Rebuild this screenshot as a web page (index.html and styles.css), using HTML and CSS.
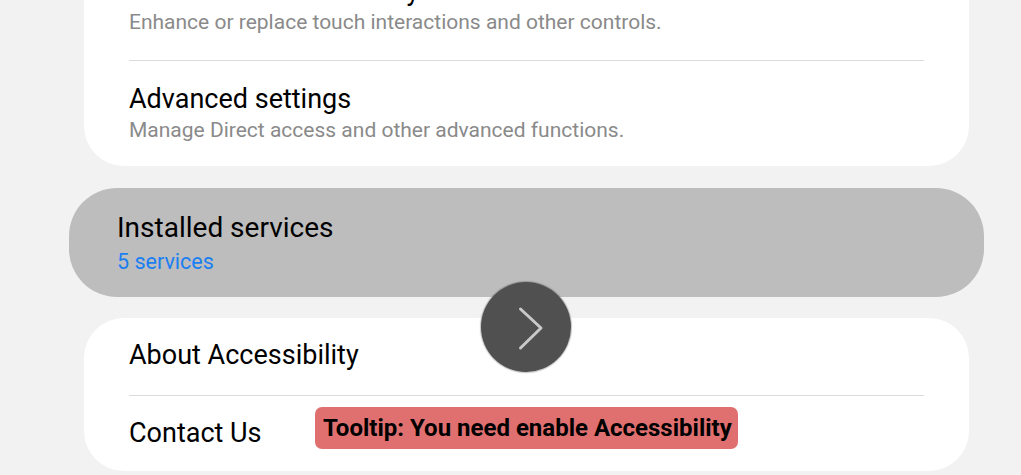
FILE: index.html
```html
<!DOCTYPE html>
<html lang="en">
<head>
<meta charset="utf-8">
<title>Accessibility</title>
<link rel="stylesheet" href="styles.css">
</head>
<body>
<main class="page">
  <section class="card">
    <div class="row row-first">
      <div class="title">Interaction and dexterity</div>
      <div class="sub">Enhance or replace touch interactions and other controls.</div>
    </div>
    <div class="divider"></div>
    <div class="row">
      <div class="title">Advanced settings</div>
      <div class="sub">Manage Direct access and other advanced functions.</div>
    </div>
  </section>

  <section class="pressed">
    <div class="p-title">Installed services</div>
    <div class="p-sub">5 services</div>
  </section>

  <section class="card">
    <div class="row row-single">
      <div class="title">About Accessibility</div>
    </div>
    <div class="divider"></div>
    <div class="row row-single row-last">
      <div class="title">Contact Us</div>
    </div>
  </section>
</main>

<button class="next-btn" aria-label="Next">
  <svg width="90" height="90" viewBox="0 0 90 90">
    <polyline points="39.5,27 60,46 39.5,66" fill="none" stroke="#c9c9c9" stroke-width="3" stroke-linecap="round" stroke-linejoin="round"/>
  </svg>
</button>

<div class="tooltip">Tooltip: You need enable Accessibility</div>
</body>
</html>
```

FILE: styles.css
```css
html, body {
  margin: 0;
  padding: 0;
  background: #f2f2f2;
  font-family: Roboto, "Liberation Sans", sans-serif;
  overflow: hidden;
}

.page {
  display: flex;
  flex-direction: column;
  margin: -47px 52px 0 84px;
}

.card {
  background: #ffffff;
  border-radius: 40px;
  padding: 0 45px;
  display: flex;
  flex-direction: column;
}

.row {
  padding: 22px 0 20px;
}

.row-first {
  padding-bottom: 22px;
}

.row-single {
  padding: 21px 0 24px;
}

.row-last {
  padding-bottom: 22px;
}

.title {
  font-size: 27px;
  line-height: 32px;
  color: #000;
  white-space: nowrap;
}

.sub {
  font-size: 21px;
  line-height: 31px;
  color: #8a8a8a;
  white-space: nowrap;
}

.divider {
  height: 1px;
  background: #dcdcdc;
}

.pressed {
  margin: 22px -15px 21px;
  height: 109px;
  box-sizing: border-box;
  background: #bdbdbd;
  border-radius: 48px;
  padding: 23px 48px 0;
}

.p-title {
  font-size: 28px;
  line-height: 33px;
  color: #000;
}

.p-sub {
  font-size: 21.5px;
  line-height: 35px;
  color: #1a7ff2;
}

.next-btn {
  position: absolute;
  left: 481px;
  top: 282px;
  width: 90px;
  height: 90px;
  padding: 0;
  border: none;
  border-radius: 50%;
  background: #505050;
  box-shadow: 0 0 1px 1px rgba(80, 80, 80, 0.35);
  display: flex;
  align-items: center;
  justify-content: center;
}

.tooltip {
  position: absolute;
  left: 315px;
  top: 407px;
  height: 42px;
  width: 423px;
  box-sizing: border-box;
  padding: 0 8px;
  background: #e07070;
  border-radius: 7px;
  font-size: 24px;
  font-weight: 700;
  line-height: 42px;
  color: #000;
  white-space: nowrap;
}
```
